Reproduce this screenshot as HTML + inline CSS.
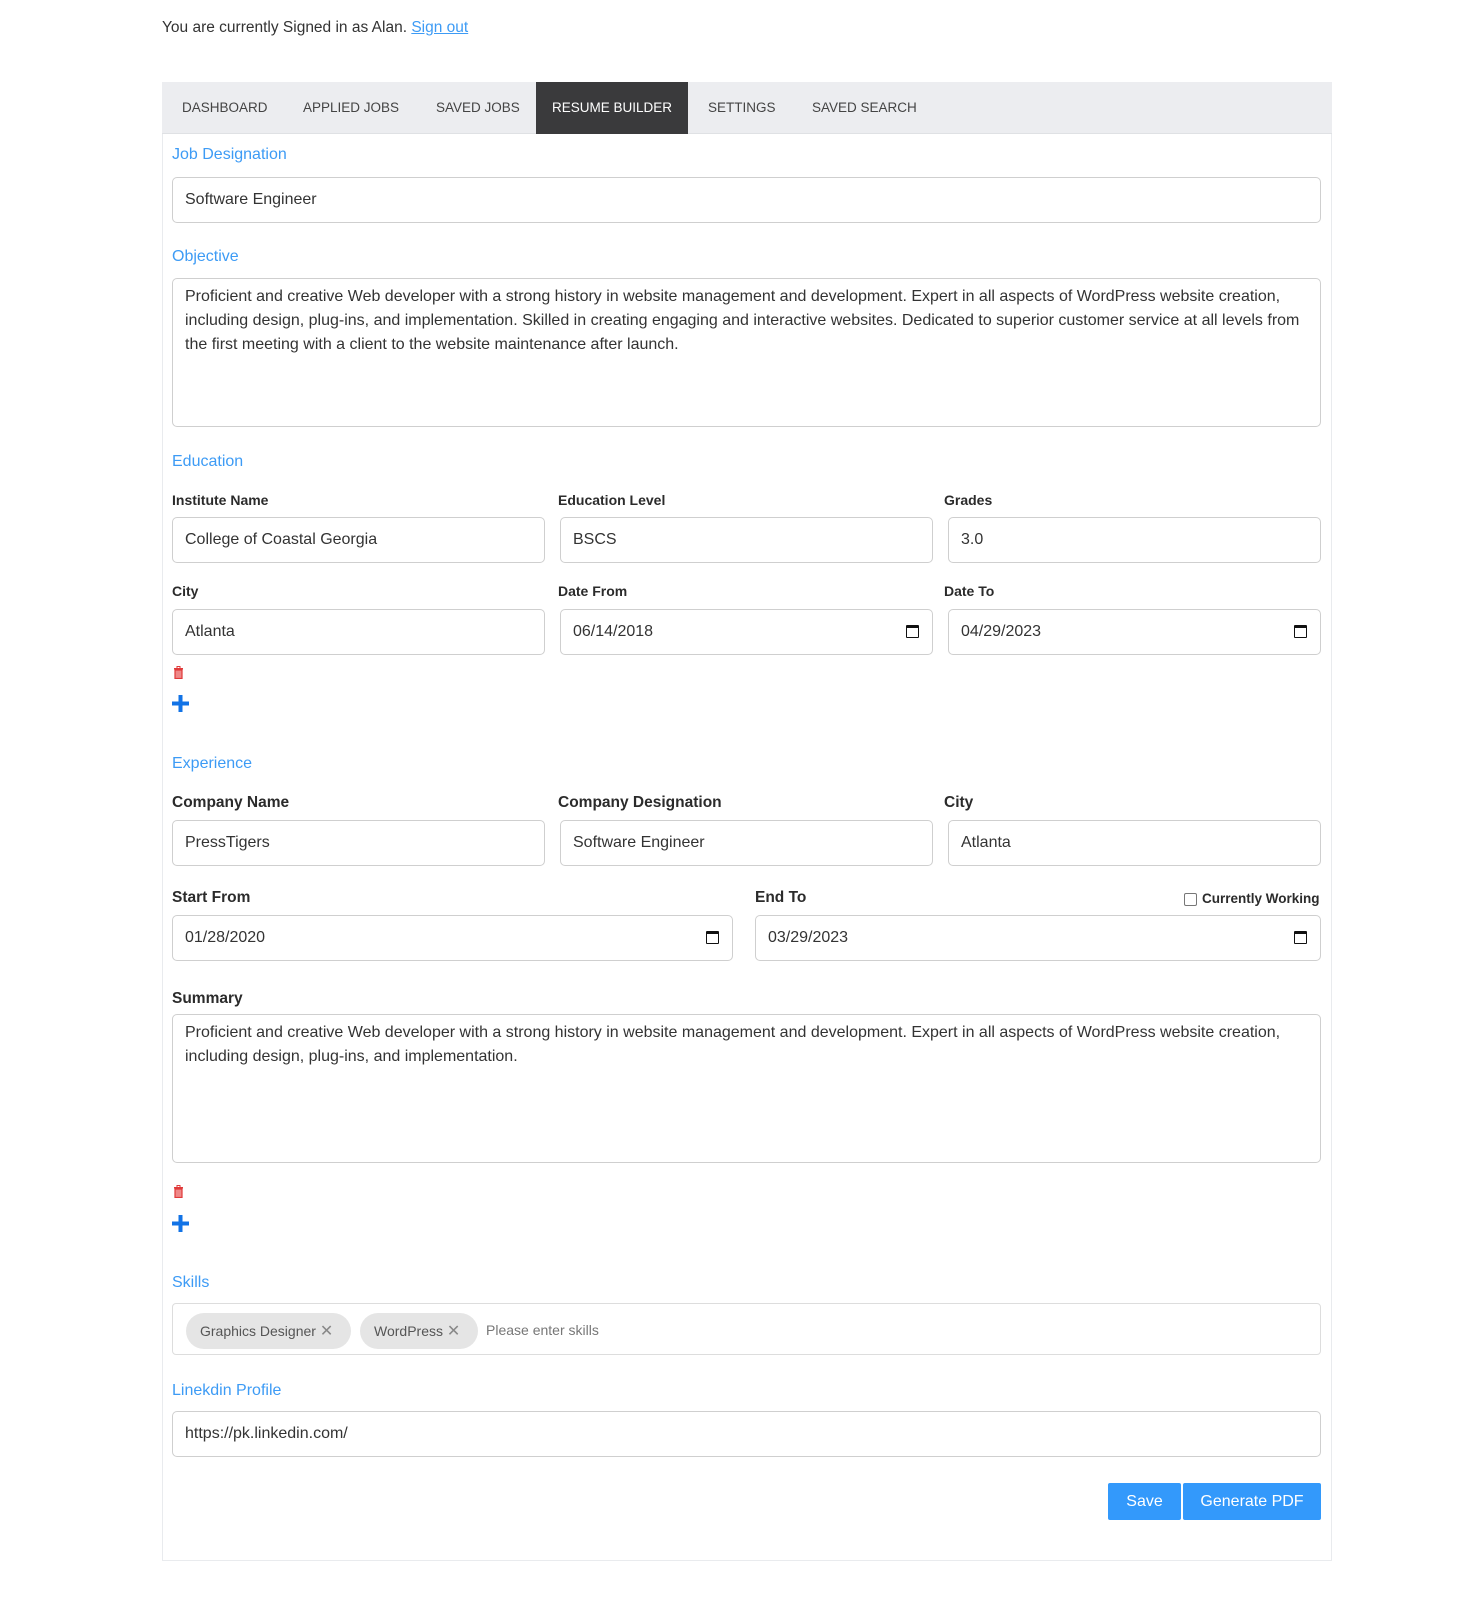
<!DOCTYPE html>
<html><head><meta charset="utf-8"><style>
*{box-sizing:border-box;margin:0;padding:0}
body{width:1481px;height:1619px;background:#fff;font-family:"Liberation Sans",sans-serif;color:#333;position:relative;overflow:hidden}
.a{position:absolute}
.top{left:162px;top:19px;font-size:15.5px;color:#333}
.top u{color:#3d9bf5}
.card{left:162px;top:82px;width:1170px;height:1479px;border:1px solid #e9ebee;border-top:none}
.tabs{left:162px;top:82px;width:1170px;height:52px;background:#ecedf0;border-bottom:1px solid #dfe1e4}
.tab{position:absolute;top:0;height:52px;line-height:52px;font-size:13.5px;color:#444;letter-spacing:0}
.tab.on{background:#3a3a3c;color:#fff}
.h{font-size:16px;color:#3d9bf5;font-weight:500}
.l{font-size:14px;font-weight:bold;color:#2b2b2b}
.l2{font-size:15.5px;font-weight:bold;color:#2b2b2b}
.in{border:1px solid #cfcfcf;border-radius:5px;height:46px;font-size:16px;color:#333;padding:0 12px;line-height:44px;white-space:nowrap;background:#fff}
.ta{border:1px solid #cfcfcf;border-radius:5px;font-size:16px;color:#333;padding:6px 12px;line-height:24px;white-space:nowrap;background:#fff}
.cal{position:absolute;right:13px;top:15px;width:13px;height:13px;border:1.5px solid #111;border-top-width:3px;border-radius:1px}
.btn{background:#3399fb;color:#fff;font-size:16px;height:37px;line-height:37px;text-align:center;border-radius:2px}
.chip{top:1313px;height:36px;line-height:36px;background:#e5e5e5;border-radius:18px;font-size:14px;color:#555;padding:0 18px 0 14px}
</style></head><body>
<div class="a top">You are currently Signed in as Alan. <u>Sign out</u></div>
<div class="a card"></div>
<div class="a tabs">
<div class="tab" style="left:20px">DASHBOARD</div>
<div class="tab" style="left:141px">APPLIED JOBS</div>
<div class="tab" style="left:274px">SAVED JOBS</div>
<div class="tab on" style="left:374px;width:152px;text-align:center">RESUME BUILDER</div>
<div class="tab" style="left:546px">SETTINGS</div>
<div class="tab" style="left:650px">SAVED SEARCH</div>
</div>

<div class="a h" style="left:172px;top:146px">Job Designation</div>
<div class="a in" style="left:172px;top:177px;width:1149px">Software Engineer</div>

<div class="a h" style="left:172px;top:248px">Objective</div>
<div class="a ta" style="left:172px;top:278px;width:1149px;height:149px">Proficient and creative Web developer with a strong history in website management and development. Expert in all aspects of WordPress website creation,<br>including design, plug-ins, and implementation. Skilled in creating engaging and interactive websites. Dedicated to superior customer service at all levels from<br>the first meeting with a client to the website maintenance after launch.</div>

<div class="a h" style="left:172px;top:453px">Education</div>
<div class="a l" style="left:172px;top:492px">Institute Name</div>
<div class="a l" style="left:558px;top:492px">Education Level</div>
<div class="a l" style="left:944px;top:492px">Grades</div>
<div class="a in" style="left:172px;top:517px;width:373px">College of Coastal Georgia</div>
<div class="a in" style="left:560px;top:517px;width:373px">BSCS</div>
<div class="a in" style="left:948px;top:517px;width:373px">3.0</div>
<div class="a l" style="left:172px;top:583px">City</div>
<div class="a l" style="left:558px;top:583px">Date From</div>
<div class="a l" style="left:944px;top:583px">Date To</div>
<div class="a in" style="left:172px;top:609px;width:373px">Atlanta</div>
<div class="a in" style="left:560px;top:609px;width:373px">06/14/2018<span class="cal"></span></div>
<div class="a in" style="left:948px;top:609px;width:373px">04/29/2023<span class="cal"></span></div>

<svg class="a" style="left:173px;top:666px" width="11" height="13" viewBox="0 0 11 13"><rect x="1" y="2" width="9" height="1.5" fill="#e03a3a"/><rect x="4" y="0.5" width="3" height="2" fill="none" stroke="#e03a3a"/><rect x="2" y="4" width="7" height="8.5" fill="#e88" stroke="#e03a3a" stroke-width="1.2"/></svg>
<svg class="a" style="left:172px;top:695px" width="17" height="17"><rect x="6.5" y="0" width="4" height="17" fill="#1273e6"/><rect x="0" y="6.5" width="17" height="4" fill="#1273e6"/></svg>

<div class="a h" style="left:172px;top:755px">Experience</div>
<div class="a l2" style="left:172px;top:794px">Company Name</div>
<div class="a l2" style="left:558px;top:794px">Company Designation</div>
<div class="a l2" style="left:944px;top:794px">City</div>
<div class="a in" style="left:172px;top:820px;width:373px">PressTigers</div>
<div class="a in" style="left:560px;top:820px;width:373px">Software Engineer</div>
<div class="a in" style="left:948px;top:820px;width:373px">Atlanta</div>
<div class="a l2" style="left:172px;top:889px">Start From</div>
<div class="a l2" style="left:755px;top:889px">End To</div>
<div class="a" style="left:1184px;top:893px;width:13px;height:13px;border:1px solid #777;border-radius:2px"></div>
<div class="a l" style="left:1202px;top:891px;font-size:13.5px">Currently Working</div>
<div class="a in" style="left:172px;top:915px;width:561px">01/28/2020<span class="cal"></span></div>
<div class="a in" style="left:755px;top:915px;width:566px">03/29/2023<span class="cal"></span></div>

<div class="a l2" style="left:172px;top:990px">Summary</div>
<div class="a ta" style="left:172px;top:1014px;width:1149px;height:149px">Proficient and creative Web developer with a strong history in website management and development. Expert in all aspects of WordPress website creation,<br>including design, plug-ins, and implementation.</div>
<svg class="a" style="left:173px;top:1185px" width="11" height="13" viewBox="0 0 11 13"><rect x="1" y="2" width="9" height="1.5" fill="#e03a3a"/><rect x="4" y="0.5" width="3" height="2" fill="none" stroke="#e03a3a"/><rect x="2" y="4" width="7" height="8.5" fill="#e88" stroke="#e03a3a" stroke-width="1.2"/></svg>
<svg class="a" style="left:172px;top:1215px" width="17" height="17"><rect x="6.5" y="0" width="4" height="17" fill="#1273e6"/><rect x="0" y="6.5" width="17" height="4" fill="#1273e6"/></svg>

<div class="a h" style="left:172px;top:1274px">Skills</div>
<div class="a" style="left:172px;top:1303px;width:1149px;height:52px;border:1px solid #ddd;border-radius:4px"></div>
<div class="a chip" style="left:186px">Graphics Designer <span style="color:#888;font-size:16px">✕</span></div>
<div class="a chip" style="left:360px">WordPress <span style="color:#888;font-size:16px">✕</span></div>
<div class="a" style="left:486px;top:1322px;font-size:14px;color:#777">Please enter skills</div>

<div class="a h" style="left:172px;top:1382px">Linekdin Profile</div>
<div class="a in" style="left:172px;top:1411px;width:1149px">https://pk.linkedin.com/</div>

<div class="a btn" style="left:1108px;top:1483px;width:73px">Save</div>
<div class="a btn" style="left:1183px;top:1483px;width:138px">Generate PDF</div>
</body></html>
